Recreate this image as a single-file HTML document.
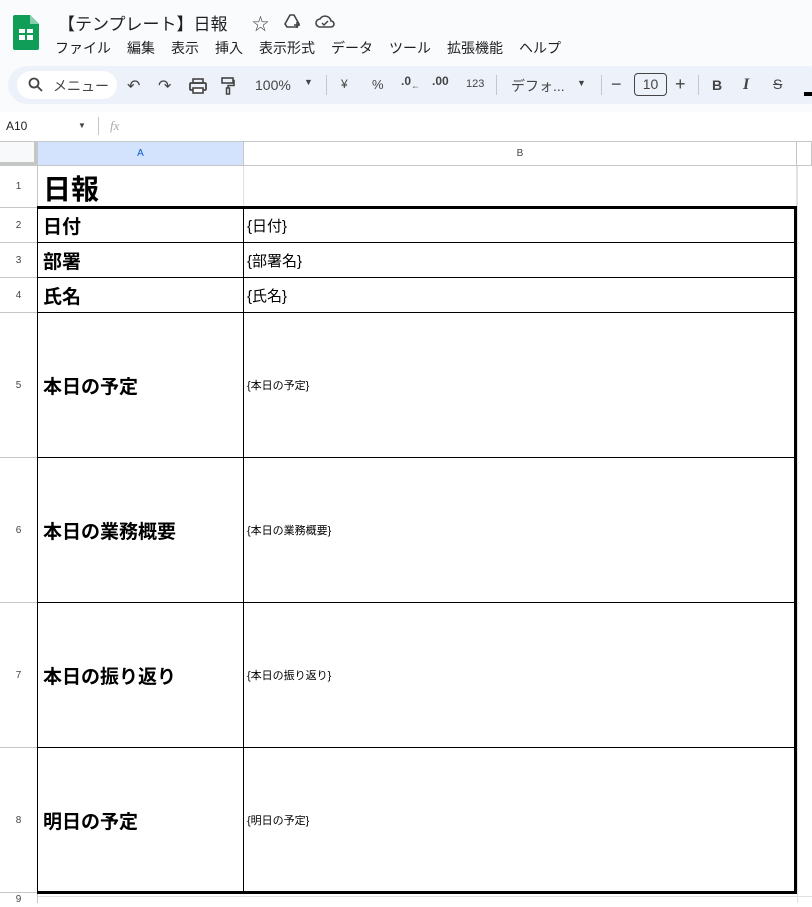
<!DOCTYPE html>
<html><head><meta charset="utf-8"><style>
*{margin:0;padding:0;box-sizing:border-box}
body{width:812px;height:903px;overflow:hidden;background:#fff;font-family:"Liberation Sans","Noto Sans CJK JP",sans-serif;position:relative;color:#1f1f1f}
.a{position:absolute;white-space:nowrap}
.top{position:absolute;left:0;top:0;width:812px;height:112px;background:#f9fbfd}
.tb{position:absolute;left:8px;top:66px;width:820px;height:38px;background:#edf2fa;border-radius:19px}
.menu span{margin-right:16px}
.ic{position:absolute;font-size:14px;color:#444}
.h{position:absolute;background:#f8f9fa;border-right:1px solid #c4c7c5;border-bottom:1px solid #c4c7c5;font-size:10px;color:#444;text-align:center}
.c{position:absolute;border-right:1px solid #e1e1e1;border-bottom:1px solid #e1e1e1}
.L{position:absolute;left:38px;width:206px;border-right:1px solid #000;border-bottom:1px solid #000;font-weight:bold;font-size:19px;color:#000;display:flex;align-items:center;padding-left:5px}
.R{position:absolute;left:243px;width:552px;border-bottom:1px solid #000;font-size:15px;color:#000;display:flex;align-items:center;padding-left:4px}
.s{font-size:11px}
</style></head><body>
<div class="top"></div>
<svg class="a" style="left:13px;top:15px" width="26" height="35" viewBox="0 0 26 35"><path d="M2 0h15l9 9v24a2 2 0 0 1-2 2H2a2 2 0 0 1-2-2V2a2 2 0 0 1 2-2z" fill="#0f9d58"/><path d="M17 0v9h9z" fill="#87ceac"/><rect x="6" y="14" width="14" height="11" fill="#fff"/><path d="M6 19h14M13 14v11" stroke="#0f9d58" stroke-width="2"/></svg>
<div class="a" style="left:58px;top:10px;font-size:17px;color:#1f1f1f">【テンプレート】日報</div>
<div class="a" style="left:252px;top:10px;font-size:17px;color:#444">☆</div>
<svg class="a" style="left:284px;top:13px" width="18" height="16" viewBox="0 0 18 16"><path d="M6 2h4l5 9-2 3H3l-2-3z" fill="none" stroke="#444" stroke-width="1.6"/><path d="M13 9v6M10 12h6" stroke="#444" stroke-width="1.6"/></svg>
<svg class="a" style="left:315px;top:14px" width="20" height="14" viewBox="0 0 20 14"><path d="M5 13a4 4 0 0 1 0-8 6 6 0 0 1 11 2 3 3 0 0 1 0 6z" fill="none" stroke="#444" stroke-width="1.6"/><path d="M7 9l2 2 4-4" fill="none" stroke="#444" stroke-width="1.5"/></svg>
<div class="a menu" style="left:55px;top:38px;font-size:14px;color:#1f1f1f"><span>ファイル</span><span>編集</span><span>表示</span><span>挿入</span><span>表示形式</span><span>データ</span><span>ツール</span><span>拡張機能</span><span>ヘルプ</span></div>
<div class="tb"></div>
<div class="a" style="left:17px;top:71px;width:100px;height:28px;background:#fff;border-radius:14px"></div>
<svg class="a" style="left:28px;top:77px" width="16" height="16" viewBox="0 0 16 16"><circle cx="6" cy="6" r="4.5" fill="none" stroke="#444" stroke-width="1.8"/><path d="M9.5 9.5L14 14" stroke="#444" stroke-width="1.8"/></svg>
<div class="a" style="left:53px;top:76px;font-size:14px;color:#444">メニュー</div>
<div class="ic" style="left:127px;top:76px;font-size:16px">↶</div>
<div class="ic" style="left:158px;top:76px;font-size:16px">↷</div>
<svg class="a" style="left:189px;top:78px" width="18" height="16" viewBox="0 0 18 16"><rect x="1" y="5" width="16" height="7" rx="1" fill="none" stroke="#444" stroke-width="1.8"/><rect x="4" y="1" width="10" height="4" fill="none" stroke="#444" stroke-width="1.6"/><rect x="4" y="10" width="10" height="5" fill="#fff" stroke="#444" stroke-width="1.6"/></svg>
<svg class="a" style="left:221px;top:77px" width="14" height="18" viewBox="0 0 14 18"><rect x="1" y="1" width="11" height="5" fill="none" stroke="#444" stroke-width="1.6"/><path d="M12 3.5h1v5H7v3" fill="none" stroke="#444" stroke-width="1.6"/><rect x="5.5" y="11" width="3" height="6" fill="none" stroke="#444" stroke-width="1.5"/></svg>
<div class="ic" style="left:255px;top:77px">100%</div>
<div class="ic" style="left:304px;top:77px;font-size:9px">▼</div>
<div class="a" style="left:326px;top:75px;width:1px;height:20px;background:#c7c7c7"></div>
<div class="ic" style="left:341px;top:77px;font-size:12px">¥</div>
<div class="ic" style="left:372px;top:77px;font-size:13px">%</div>
<div class="ic" style="left:401px;top:74px;font-size:12px;font-weight:bold">.0<sub style="font-size:9px">←</sub></div>
<div class="ic" style="left:432px;top:74px;font-size:12px;font-weight:bold">.00</div>
<div class="ic" style="left:466px;top:78px;font-size:11px">123</div>
<div class="a" style="left:496px;top:75px;width:1px;height:20px;background:#c7c7c7"></div>
<div class="ic" style="left:511px;top:76px">デフォ...</div>
<div class="ic" style="left:577px;top:78px;font-size:9px">▼</div>
<div class="a" style="left:601px;top:75px;width:1px;height:20px;background:#c7c7c7"></div>
<div class="ic" style="left:611px;top:74px;font-size:18px">−</div>
<div class="a" style="left:634px;top:73px;width:33px;height:23px;border:1px solid #444;border-radius:4px;font-size:14px;color:#444;text-align:center;line-height:21px">10</div>
<div class="ic" style="left:675px;top:74px;font-size:18px">+</div>
<div class="a" style="left:698px;top:75px;width:1px;height:20px;background:#c7c7c7"></div>
<div class="ic" style="left:712px;top:77px;font-weight:bold">B</div>
<div class="ic" style="left:743px;top:76px;font-weight:bold;font-style:italic;font-family:'Liberation Serif',serif;font-size:16px">I</div>
<div class="ic" style="left:773px;top:76px;text-decoration:line-through">S</div>
<div class="a" style="left:804px;top:92px;width:8px;height:4px;background:#000"></div>
<div class="a" style="left:6px;top:119px;font-size:12px;color:#1f1f1f">A10</div>
<div class="a" style="left:78px;top:121px;font-size:8px;color:#444">▼</div>
<div class="a" style="left:98px;top:117px;width:1px;height:18px;background:#c7c7c7"></div>
<div class="a" style="left:110px;top:118px;font-size:13px;color:#aaa;font-style:italic;font-family:'Liberation Serif',serif">fx</div>
<div class="a" style="left:0;top:141px;width:812px;height:1px;background:#c4c7c5"></div>
<div class="h" style="left:0;top:142px;width:38px;height:24px;border-right:4px solid #c4c7c5;border-bottom:4px solid #c4c7c5"></div>
<div class="h" style="left:38px;top:142px;width:206px;height:24px;background:#d3e3fd;line-height:23px;color:#0b57d0">A</div>
<div class="h" style="left:244px;top:142px;width:553px;height:24px;line-height:23px;background:#fff">B</div>
<div class="h" style="left:797px;top:142px;width:15px;height:24px;background:#fff"></div>
<div class="h" style="left:0;top:166px;width:38px;height:42px;line-height:42px;background:#fff">1</div>
<div class="h" style="left:0;top:208px;width:38px;height:35px;line-height:35px;background:#fff">2</div>
<div class="h" style="left:0;top:243px;width:38px;height:35px;line-height:35px;background:#fff">3</div>
<div class="h" style="left:0;top:278px;width:38px;height:35px;line-height:35px;background:#fff">4</div>
<div class="h" style="left:0;top:313px;width:38px;height:145px;line-height:145px;background:#fff">5</div>
<div class="h" style="left:0;top:458px;width:38px;height:145px;line-height:145px;background:#fff">6</div>
<div class="h" style="left:0;top:603px;width:38px;height:145px;line-height:145px;background:#fff">7</div>
<div class="h" style="left:0;top:748px;width:38px;height:145px;line-height:145px;background:#fff">8</div>
<div class="h" style="left:0;top:893px;width:38px;height:10px;line-height:14px;background:#fff;border-bottom:none">9</div>
<div class="c" style="left:38px;top:166px;width:206px;height:42px"></div>
<div class="c" style="left:244px;top:166px;width:553px;height:42px"></div>
<div class="a" style="left:43px;top:168px;font-size:28px;font-weight:bold;color:#000">日報</div>
<div class="L" style="top:208px;height:35px">日付</div><div class="R" style="top:208px;height:35px">{日付}</div>
<div class="L" style="top:243px;height:35px">部署</div><div class="R" style="top:243px;height:35px">{部署名}</div>
<div class="L" style="top:278px;height:35px">氏名</div><div class="R" style="top:278px;height:35px">{氏名}</div>
<div class="L" style="top:313px;height:145px">本日の予定</div><div class="R s" style="top:313px;height:145px">{本日の予定}</div>
<div class="L" style="top:458px;height:145px">本日の業務概要</div><div class="R s" style="top:458px;height:145px">{本日の業務概要}</div>
<div class="L" style="top:603px;height:145px">本日の振り返り</div><div class="R s" style="top:603px;height:145px">{本日の振り返り}</div>
<div class="L" style="top:748px;height:145px">明日の予定</div><div class="R s" style="top:748px;height:145px">{明日の予定}</div>
<div class="a" style="left:797px;top:166px;width:1px;height:737px;background:#e1e1e1"></div>
<div class="a" style="left:38px;top:896px;width:774px;height:1px;background:#e1e1e1"></div>
<div class="a" style="left:37px;top:206px;width:760px;height:688px;border-left:1px solid #000;border-right:3px solid #000;border-top:3px solid #000;border-bottom:3px solid #000"></div>
</body></html>
